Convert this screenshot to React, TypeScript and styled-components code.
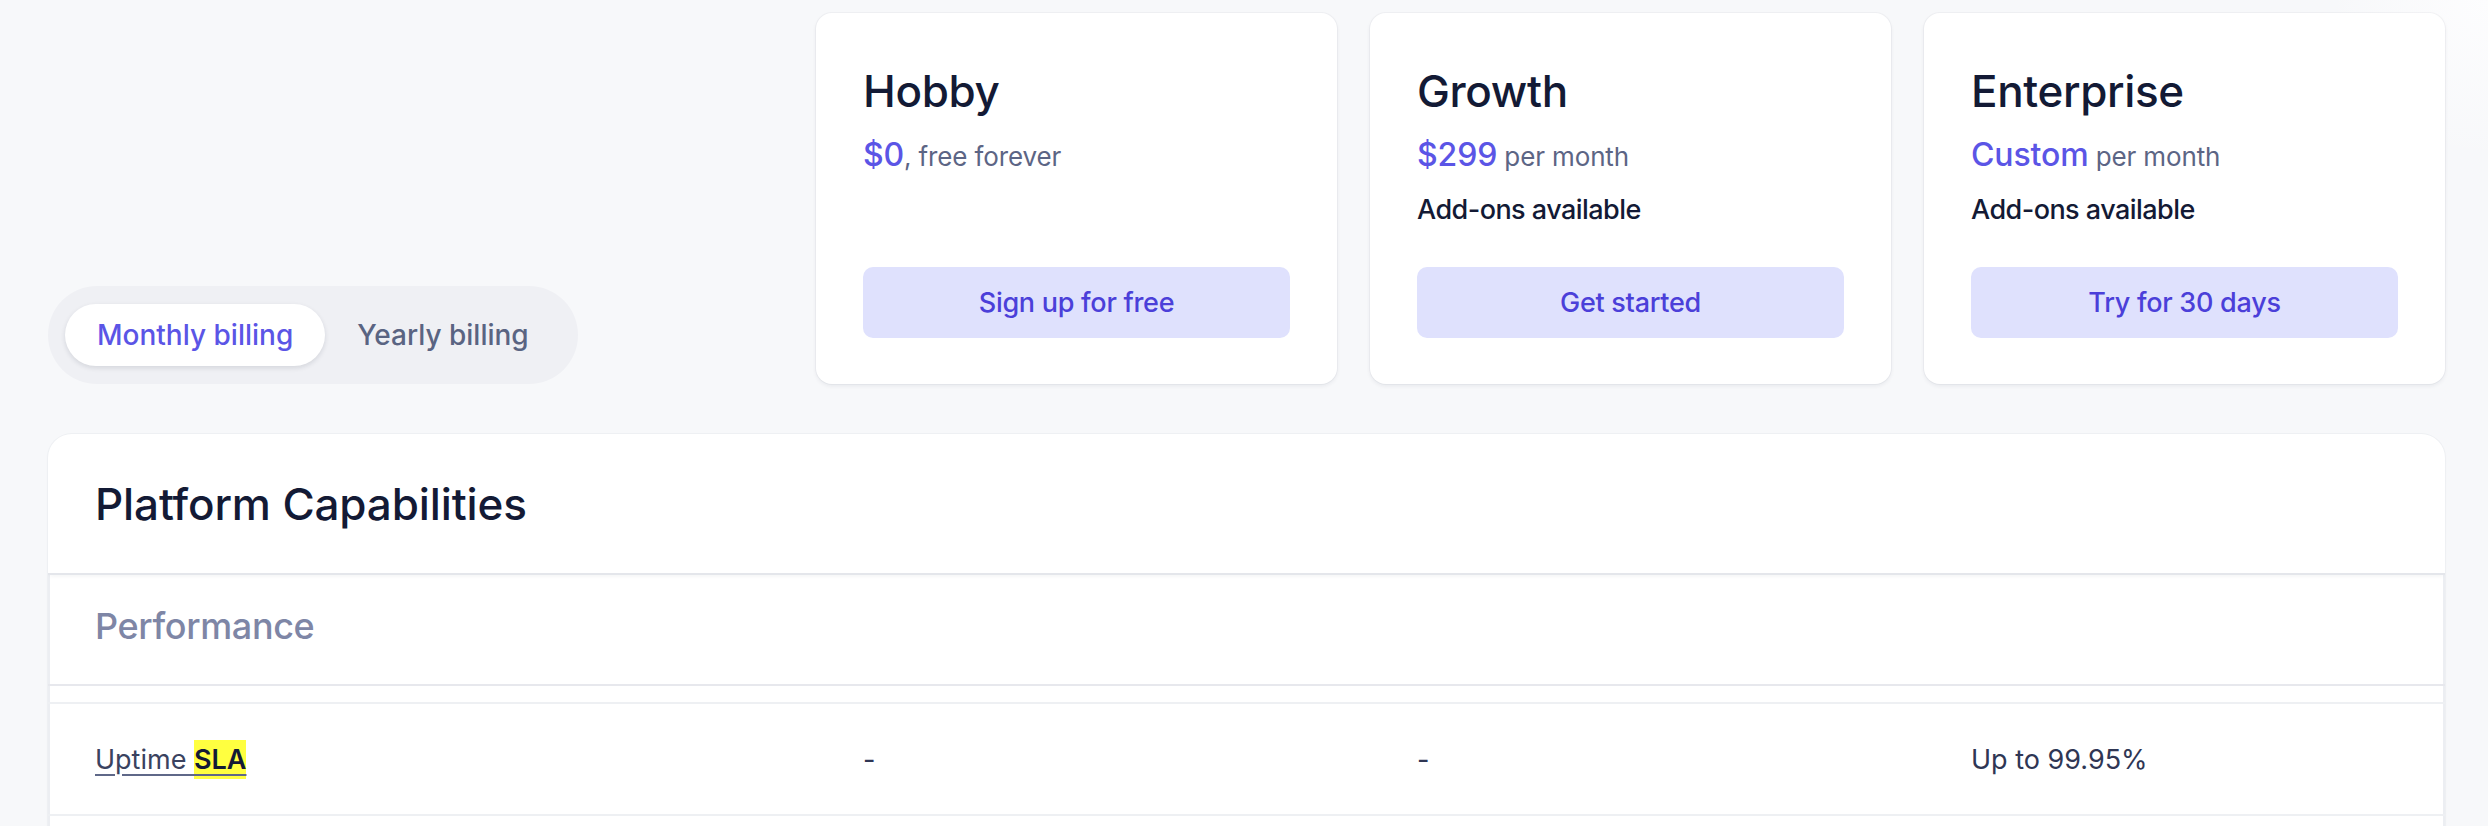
import React from 'react';
import styled, { createGlobalStyle, css } from 'styled-components';

const Global = createGlobalStyle`
  html, body { margin: 0; padding: 0; }
  body {
    background: #f7f8fa;
    font-family: Inter, "Noto Sans", "Liberation Sans", sans-serif;
    -webkit-font-smoothing: antialiased;
  }
  * { box-sizing: border-box; }
`;

const columns = css`
  display: grid;
  grid-template-columns: 735px repeat(3, 1fr);
  column-gap: 33px;
`;

const Page = styled.div`
  min-height: 826px;
  padding: 13px 43px 0 48px;
  background: radial-gradient(circle at 100% 0, #fdfdfe 0, rgba(247, 248, 250, 0) 160px), #f7f8fa;
`;

const PlanGrid = styled.div`
  ${columns}
`;

const ToggleSlot = styled.div`
  align-self: end;
  justify-self: start;
`;

const Toggle = styled.div`
  display: inline-flex;
  align-items: center;
  padding: 18px 17px;
  border-radius: 999px;
  background: #eff0f4;
`;

const ToggleButton = styled.button<{ $active?: boolean }>`
  height: 62px;
  padding: 0 32px;
  border: none;
  border-radius: 999px;
  font-family: inherit;
  font-size: 28px;
  font-weight: 500;
  letter-spacing: 0;
  cursor: pointer;
  background: ${(p) => (p.$active ? '#ffffff' : 'transparent')};
  color: ${(p) => (p.$active ? '#5b55e6' : '#5a6482')};
  box-shadow: ${(p) => (p.$active ? '0 2px 5px rgba(20, 26, 53, 0.12)' : 'none')};
`;

const Card = styled.div`
  display: flex;
  flex-direction: column;
  padding: 52px 47px 46px;
  background: #ffffff;
  border-radius: 16px;
  box-shadow: 0 0 0 1px rgba(20, 26, 53, 0.03), 0 2px 4px rgba(20, 26, 53, 0.07);
`;

const PlanName = styled.h3`
  margin: 0;
  font-size: 44px;
  line-height: 1.2;
  font-weight: 500;
  letter-spacing: -0.008em;
  color: #131a35;
`;

const Price = styled.div`
  margin-top: 19px;
  font-size: 26px;
  line-height: 36px;
  color: #5c6585;
  letter-spacing: -0.005em;
`;

const Amount = styled.span`
  font-size: 32px;
  font-weight: 500;
  color: #5b55e6;
`;

const Note = styled.div`
  margin-top: 19px;
  margin-bottom: 41px;
  font-size: 27px;
  line-height: 32px;
  font-weight: 500;
  letter-spacing: -0.02em;
  color: #131a35;
`;

const Cta = styled.button`
  margin-top: auto;
  height: 71px;
  border: none;
  border-radius: 10px;
  background: #dfe1fd;
  color: #4b3fd9;
  font-family: inherit;
  font-size: 27px;
  font-weight: 500;
  letter-spacing: -0.01em;
  cursor: pointer;
`;

const Panel = styled.section`
  margin-top: 50px;
  padding-bottom: 40px;
  background: #ffffff;
  border-radius: 24px;
  box-shadow: 0 0 0 1px #eef0f3, 0 1px 3px rgba(20, 26, 53, 0.04);
  overflow: hidden;
`;

const PanelHeader = styled.div`
  position: relative;
  z-index: 1;
  padding: 44px 47px 42px;
  border-bottom: 2px solid #e4e6eb;
  box-shadow: 0 3px 4px -2px rgba(20, 26, 53, 0.06);
`;

const PanelTitle = styled.h2`
  margin: 0;
  font-size: 44px;
  line-height: 1.2;
  font-weight: 500;
  letter-spacing: -0.003em;
  color: #131a35;
`;

const SectionBody = styled.div`
  box-shadow: inset 2px 0 0 #eceef2, inset -2px 0 0 #eceef2;
`;

const SectionTitle = styled.div`
  padding: 30px 47px 36px;
  font-size: 36px;
  line-height: 1.2;
  font-weight: 500;
  letter-spacing: -0.01em;
  color: #7e86a6;
  border-bottom: 2px solid #e7e8ed;
`;

const Spacer = styled.div`
  height: 18px;
  border-bottom: 2px solid #eef0f3;
`;

const Row = styled.div`
  ${columns}
  border-bottom: 2px solid #eef0f3;
`;

const Cell = styled.div`
  padding: 40px 47px 38px;
  font-size: 27px;
  line-height: 1.2;
  letter-spacing: 0;
  color: #2f3654;
`;

const FeatureLink = styled.span`
  color: #3a4260;
  text-decoration: underline;
  text-decoration-color: #5f6888;
  text-decoration-thickness: 2px;
  text-underline-offset: 5px;
`;

const Mark = styled.mark`
  padding: 3px 0;
  background: #ffff40;
  color: #131a35;
  font-weight: 600;
`;

type Plan = { name: string; amount: string; suffix: string; note?: string; cta: string };

const plans: Plan[] = [
  { name: 'Hobby', amount: '$0', suffix: ', free forever', cta: 'Sign up for free' },
  { name: 'Growth', amount: '$299', suffix: ' per month', note: 'Add-ons available', cta: 'Get started' },
  { name: 'Enterprise', amount: 'Custom', suffix: ' per month', note: 'Add-ons available', cta: 'Try for 30 days' },
];

export default function App() {
  return (
    <>
      <Global />
      <Page>
        <PlanGrid>
          <ToggleSlot>
            <Toggle>
              <ToggleButton $active>Monthly billing</ToggleButton>
              <ToggleButton>Yearly billing</ToggleButton>
            </Toggle>
          </ToggleSlot>
          {plans.map((p) => (
            <Card key={p.name}>
              <PlanName>{p.name}</PlanName>
              <Price>
                <Amount>{p.amount}</Amount>
                {p.suffix}
              </Price>
              {p.note && <Note>{p.note}</Note>}
              <Cta>{p.cta}</Cta>
            </Card>
          ))}
        </PlanGrid>
        <Panel>
          <PanelHeader>
            <PanelTitle>Platform Capabilities</PanelTitle>
          </PanelHeader>
          <SectionBody>
            <SectionTitle>Performance</SectionTitle>
            <Spacer />
            <Row>
              <Cell>
                <FeatureLink>
                  Uptime <Mark>SLA</Mark>
                </FeatureLink>
              </Cell>
              <Cell>-</Cell>
              <Cell>-</Cell>
              <Cell>Up to 99.95%</Cell>
            </Row>
            <Row>
              <Cell>&nbsp;</Cell>
              <Cell />
              <Cell />
              <Cell />
            </Row>
          </SectionBody>
        </Panel>
      </Page>
    </>
  );
}
